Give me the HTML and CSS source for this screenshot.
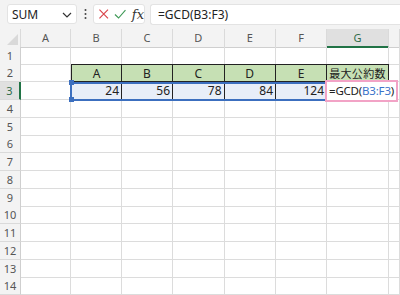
FILE: index.html
```html
<!DOCTYPE html>
<html>
<head>
<meta charset="utf-8">
<link rel="stylesheet" href="styles.css">
</head>
<body>
<div class="app">
  <div class="toolbar">
    <div class="namebox"><span>SUM</span>
      <svg class="chev" width="10" height="6" viewBox="0 0 10 6"><path d="M1 1 L5 5 L9 1" fill="none" stroke="#333" stroke-width="1.2"/></svg>
    </div>
    <div class="dots"><svg width="3" height="12" viewBox="0 0 3 12"><circle cx="1.5" cy="2" r="1" fill="#444"/><circle cx="1.5" cy="6" r="1" fill="#444"/><circle cx="1.5" cy="10" r="1" fill="#444"/></svg></div>
    <div class="fnbox">
      <svg width="12" height="12" viewBox="0 0 12 12"><path d="M1.5 1.5 L10.5 10.5 M10.5 1.5 L1.5 10.5" stroke="#d9444a" stroke-width="1.2" fill="none"/></svg>
      <svg width="13" height="12" viewBox="0 0 13 12"><path d="M1 6.5 L4.8 10.2 L12 2" stroke="#3f9a57" stroke-width="1.2" fill="none"/></svg>
      <span class="fx">fx</span>
    </div>
    <div class="formula">=GCD(B3:F3)</div>
  </div>
  <div class="sheet">
    <div class="row hdr">
      <div class="corner"><svg width="12" height="12" viewBox="0 0 12 12"><path d="M12 1 L12 12 L1 12 Z" fill="#d9d9d9"/></svg></div>
      <div class="ch">A</div><div class="ch">B</div><div class="ch">C</div><div class="ch">D</div><div class="ch">E</div><div class="ch">F</div><div class="ch sel">G</div><div class="ch"></div>
    </div>
    <div class="row"><div class="rh">1</div><div class="c"></div><div class="c"></div><div class="c"></div><div class="c"></div><div class="c"></div><div class="c"></div><div class="c"></div><div class="c"></div></div>
    <div class="row"><div class="rh">2</div><div class="c"></div><div class="c g">A</div><div class="c g">B</div><div class="c g">C</div><div class="c g">D</div><div class="c g">E</div><div class="c g jp">最大公約数</div><div class="c"></div></div>
    <div class="row r3"><div class="rh sel">3</div><div class="c"></div><div class="c v">24</div><div class="c v">56</div><div class="c v">78</div><div class="c v">84</div><div class="c v">124</div><div class="c k"></div><div class="c"></div></div>
    <div class="row"><div class="rh">4</div><div class="c"></div><div class="c"></div><div class="c"></div><div class="c"></div><div class="c"></div><div class="c"></div><div class="c"></div><div class="c"></div></div>
    <div class="row"><div class="rh">5</div><div class="c"></div><div class="c"></div><div class="c"></div><div class="c"></div><div class="c"></div><div class="c"></div><div class="c"></div><div class="c"></div></div>
    <div class="row"><div class="rh">6</div><div class="c"></div><div class="c"></div><div class="c"></div><div class="c"></div><div class="c"></div><div class="c"></div><div class="c"></div><div class="c"></div></div>
    <div class="row"><div class="rh">7</div><div class="c"></div><div class="c"></div><div class="c"></div><div class="c"></div><div class="c"></div><div class="c"></div><div class="c"></div><div class="c"></div></div>
    <div class="row"><div class="rh">8</div><div class="c"></div><div class="c"></div><div class="c"></div><div class="c"></div><div class="c"></div><div class="c"></div><div class="c"></div><div class="c"></div></div>
    <div class="row"><div class="rh">9</div><div class="c"></div><div class="c"></div><div class="c"></div><div class="c"></div><div class="c"></div><div class="c"></div><div class="c"></div><div class="c"></div></div>
    <div class="row"><div class="rh">10</div><div class="c"></div><div class="c"></div><div class="c"></div><div class="c"></div><div class="c"></div><div class="c"></div><div class="c"></div><div class="c"></div></div>
    <div class="row"><div class="rh">11</div><div class="c"></div><div class="c"></div><div class="c"></div><div class="c"></div><div class="c"></div><div class="c"></div><div class="c"></div><div class="c"></div></div>
    <div class="row"><div class="rh">12</div><div class="c"></div><div class="c"></div><div class="c"></div><div class="c"></div><div class="c"></div><div class="c"></div><div class="c"></div><div class="c"></div></div>
    <div class="row"><div class="rh">13</div><div class="c"></div><div class="c"></div><div class="c"></div><div class="c"></div><div class="c"></div><div class="c"></div><div class="c"></div><div class="c"></div></div>
    <div class="row"><div class="rh">14</div><div class="c"></div><div class="c"></div><div class="c"></div><div class="c"></div><div class="c"></div><div class="c"></div><div class="c"></div><div class="c"></div></div>

    <div class="selection"><span class="hd tl"></span><span class="hd bl"></span></div>
    <div class="editor">=GCD(<span class="ref">B3:F3</span>)</div>
  </div>
</div>
</body>
</html>
```
FILE: styles.css
```css
html, body { margin: 0; padding: 0; }
body {
  width: 400px; height: 295px; overflow: hidden; background: #fff;
  font-family: "Noto Sans", "Noto Sans CJK JP", sans-serif;
  color: #222;
}
.app { width: 400px; height: 295px; display: flex; flex-direction: column; }
.toolbar {
  height: 30px; background: #f3f3f3; display: flex; align-items: flex-start;
  padding: 4px 0 0 7px; box-sizing: border-box; gap: 0;
}
.namebox {
  width: 70px; height: 20px; box-sizing: border-box; background: #fff;
  border: 1px solid #e3e3e3; border-radius: 3px; display: flex; align-items: center;
  justify-content: space-between; padding: 0 4px 0 4px; font-size: 12px; color: #222;
}
.namebox .chev { margin-top: 1px; }
.dots { width: 16px; height: 20px; display: flex; align-items: center; justify-content: center; }
.fnbox {
  width: 52px; height: 20px; box-sizing: border-box; background: #fff;
  border: 1px solid #e3e3e3; border-radius: 3px; display: flex; align-items: center;
  gap: 5px; padding-left: 4px;
}
.fx { font-family: "DejaVu Serif", "Liberation Serif", serif; font-style: italic; font-size: 13px; color: #333; }
.formula {
  flex: 1; height: 21px; box-sizing: border-box; background: #fff; margin-left: 5px;
  border: 1px solid #e3e3e3; border-right: none; border-radius: 3px 0 0 3px;
  font-size: 12px; line-height: 19px; padding-left: 7px; color: #222;
}
.sheet { position: relative; flex: 1; }
.row {
  display: grid;
  grid-template-columns: 21px 50px 51px 51px 51.5px 51.5px 51px 62px 1fr;
  height: 17.75px;
}
.row.hdr { height: 18px; background: #f3f3f3; }
.corner { display: flex; align-items: flex-end; justify-content: flex-end; padding: 0 2px 2px 0; border-right: 1px solid #dadada; border-bottom: 1px solid #dadada; box-sizing: border-box; }
.ch {
  border-right: 1px solid #dadada; border-bottom: 1px solid #cfcfcf; box-sizing: border-box;
  font-size: 11px; color: #555; text-align: center; line-height: 17px;
}
.ch.sel { background: #e0e0e0; border-bottom: 2px solid #217346; color: #2f6b48; }
.rh {
  background: #f3f3f3; border-right: 1px solid #cfcfcf; border-bottom: 1px solid #dadada; box-sizing: border-box;
  font-size: 11px; color: #555; text-align: center; line-height: 17px;
}
.rh.sel { background: #e0e0e0; border-right: 2px solid #217346; color: #2f6b48; }
.c {
  border-right: 1px solid #dcdcdc; border-bottom: 1px solid #dcdcdc; box-sizing: border-box;
  font-size: 12px; line-height: 17px; white-space: nowrap; overflow: hidden;
}
.c.g {
  background: #c6e0b4; border: 1px solid #222; border-left: none; text-align: center; color: #222;
  border-top: 1px solid #222;
}
.c.g.jp { font-size: 11px; letter-spacing: 0.3px; }
.row .c.g:nth-child(3) { border-left: 1px solid #222; }
.c.v {
  background: #e8eef8; border-right: 1px solid #222; border-bottom: 1px solid #222; text-align: right; padding-right: 2px; color: #222;
}
.c.k { border-right: 1px solid #222; border-bottom: 1px solid #222; }
.selection {
  position: absolute; left: 70px; top: 53px; width: 257px; height: 19px;
  border: 2px solid #3c6fbf; box-sizing: border-box; pointer-events: none;
}
.hd { position: absolute; width: 5px; height: 5px; background: #3c6fbf; }
.hd.tl { left: -3.5px; top: -3.5px; }
.hd.bl { left: -3.5px; bottom: -3.5px; }
.editor {
  position: absolute; left: 325px; top: 51px; width: 73px; height: 22px; box-sizing: border-box;
  border: 2px solid #f2a3c6; background: #fff; font-size: 11.5px; line-height: 18px; padding-left: 2px;
  color: #222; white-space: nowrap; letter-spacing: -0.2px;
}
.ref { color: #3b73c9; }
```
